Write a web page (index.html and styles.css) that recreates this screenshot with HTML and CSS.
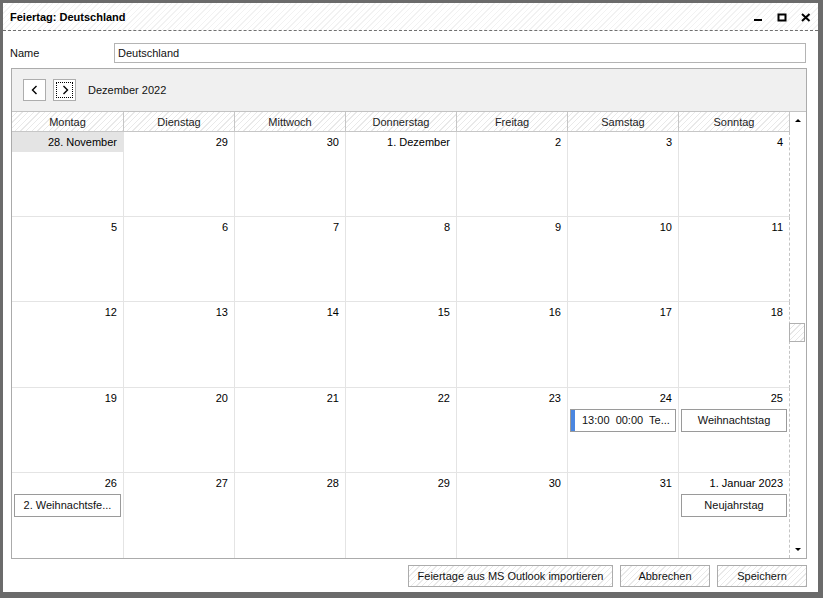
FILE: index.html
```html
<!DOCTYPE html>
<html>

<head>
    <link rel="stylesheet" href="styles.css">
</head>

<body>
    <div id="window">
        <div id="titlebar">
            <span id="title">Feiertag: Deutschland</span>
            <div id="controls">
                <svg class="ctl" width="10" height="10" viewBox="0 0 10 10"><rect x="1" y="6" width="8" height="2" fill="#000" /></svg>
                <svg class="ctl" width="10" height="10" viewBox="0 0 10 10"><rect x="1.5" y="1.5" width="7" height="6" fill="none" stroke="#000" stroke-width="2" /></svg>
                <svg class="ctl" width="10" height="10" viewBox="0 0 10 10"><path d="M1 1 L8.5 8 M8.5 1 L1 8" stroke="#000" stroke-width="2" /></svg>
            </div>
        </div>

        <div id="nameRow">
            <label for="nameInput">Name</label>
            <input type="text" id="nameInput" value="Deutschland" />
        </div>

        <div id="calendar">
            <div id="toolbar">
                <button class="nav">
                    <svg width="8" height="10" viewBox="0 0 8 10"><polyline points="5.5,1 1.5,5 5.5,9" fill="none" stroke="#000" stroke-width="1.4" /></svg>
                </button>
                <button class="nav focused">
                    <span class="focusRect">
                        <svg width="8" height="10" viewBox="0 0 8 10"><polyline points="2.5,1 6.5,5 2.5,9" fill="none" stroke="#000" stroke-width="1.4" /></svg>
                    </span>
                </button>
                <span id="month">Dezember 2022</span>
            </div>

            <div id="calBody">
                <div id="grid">
                    <div class="head">Montag</div>
                    <div class="head">Dienstag</div>
                    <div class="head">Mittwoch</div>
                    <div class="head">Donnerstag</div>
                    <div class="head">Freitag</div>
                    <div class="head">Samstag</div>
                    <div class="head">Sonntag</div>

                    <div class="day"><div class="num today">28. November</div></div>
                    <div class="day"><div class="num">29</div></div>
                    <div class="day"><div class="num">30</div></div>
                    <div class="day"><div class="num">1. Dezember</div></div>
                    <div class="day"><div class="num">2</div></div>
                    <div class="day"><div class="num">3</div></div>
                    <div class="day"><div class="num">4</div></div>

                    <div class="day"><div class="num">5</div></div>
                    <div class="day"><div class="num">6</div></div>
                    <div class="day"><div class="num">7</div></div>
                    <div class="day"><div class="num">8</div></div>
                    <div class="day"><div class="num">9</div></div>
                    <div class="day"><div class="num">10</div></div>
                    <div class="day"><div class="num">11</div></div>

                    <div class="day"><div class="num">12</div></div>
                    <div class="day"><div class="num">13</div></div>
                    <div class="day"><div class="num">14</div></div>
                    <div class="day"><div class="num">15</div></div>
                    <div class="day"><div class="num">16</div></div>
                    <div class="day"><div class="num">17</div></div>
                    <div class="day"><div class="num">18</div></div>

                    <div class="day"><div class="num">19</div></div>
                    <div class="day"><div class="num">20</div></div>
                    <div class="day"><div class="num">21</div></div>
                    <div class="day"><div class="num">22</div></div>
                    <div class="day"><div class="num">23</div></div>
                    <div class="day">
                        <div class="num">24</div>
                        <div class="event timed">13:00&nbsp; 00:00&nbsp; Te...</div>
                    </div>
                    <div class="day">
                        <div class="num">25</div>
                        <div class="event">Weihnachtstag</div>
                    </div>

                    <div class="day">
                        <div class="num">26</div>
                        <div class="event">2. Weihnachtsfe...</div>
                    </div>
                    <div class="day"><div class="num">27</div></div>
                    <div class="day"><div class="num">28</div></div>
                    <div class="day"><div class="num">29</div></div>
                    <div class="day"><div class="num">30</div></div>
                    <div class="day"><div class="num">31</div></div>
                    <div class="day">
                        <div class="num">1. Januar 2023</div>
                        <div class="event">Neujahrstag</div>
                    </div>
                </div>

                <div id="scrollbar">
                    <span class="arrow up"></span>
                    <span id="thumb"></span>
                    <span class="arrow down"></span>
                </div>
            </div>
        </div>

        <div id="buttons">
            <button class="btn wide">Feiertage aus MS Outlook importieren</button>
            <button class="btn">Abbrechen</button>
            <button class="btn">Speichern</button>
        </div>
    </div>
</body>

</html>
```

FILE: styles.css
```css
body {
    margin: 0;
    background-color: #6b6b6b;
    font-family: "Liberation Sans", Arial, sans-serif;
    font-size: 11px;
    color: #111;
}

#window {
    margin: 3px 5px 6px 3px;
    height: 589px;
    background-color: #fff;
    display: flex;
    flex-direction: column;
}

#titlebar {
    height: 27px;
    border-bottom: 1px dashed #6f6f6f;
    background: repeating-linear-gradient(135deg, #fff 0 3px, #f2f2f2 3px 4px);
    display: flex;
    align-items: center;
    justify-content: space-between;
    padding: 0 7px 0 7px;
}

#title {
    font-weight: bold;
    font-size: 11px;
    color: #000;
}

#controls {
    display: flex;
    gap: 14px;
    padding-top: 2px;
}

.ctl {
    display: block;
}

#nameRow {
    margin-top: 12px;
    height: 20px;
    display: flex;
    align-items: center;
    padding: 0 12px 0 7px;
}

#nameRow label {
    width: 104px;
}

#nameInput {
    flex: 1;
    height: 20px;
    box-sizing: border-box;
    border: 1px solid #b4b4b4;
    padding: 0 3px;
    font-family: inherit;
    font-size: 11px;
    color: #111;
    outline: none;
}

#calendar {
    margin: 5px 11px 0 8px;
    height: 491px;
    box-sizing: border-box;
    border: 1px solid #ababab;
    display: flex;
    flex-direction: column;
}

#toolbar {
    height: 42px;
    background-color: #f0f0f0;
    display: flex;
    align-items: center;
    padding-left: 11px;
    gap: 7px;
}

.nav {
    width: 23px;
    height: 22px;
    border: 1px solid #adadad;
    background-color: #fff;
    padding: 0;
    display: flex;
    align-items: center;
    justify-content: center;
}

.focusRect {
    width: 17px;
    height: 16px;
    border: 1px dotted #000;
    box-sizing: border-box;
    display: flex;
    align-items: center;
    justify-content: center;
}

#month {
    margin-left: 5px;
}

#calBody {
    flex: 1;
    display: flex;
    border-top: 1px solid #c3c3c3;
}

#grid {
    width: 778px;
    display: grid;
    grid-template-columns: 112px repeat(6, 111px);
    grid-template-rows: 20px repeat(5, 1fr);
}

.head {
    border-right: 1px solid #c6c6c6;
    border-bottom: 1px solid #c6c6c6;
    background: repeating-linear-gradient(135deg, #fff 0 3px, #e9e9e9 3px 4px);
    text-align: center;
    line-height: 20px;
    color: #222;
}

.day {
    border-right: 1px solid #e4e4e4;
    border-bottom: 1px solid #e4e4e4;
    min-width: 0;
}

.day:nth-child(7n) {
    border-right: 1px dashed #c4c4c4;
}

.day:nth-last-child(-n+7) {
    border-bottom: none;
}

.num {
    height: 20px;
    line-height: 20px;
    text-align: right;
    padding-right: 6px;
    color: #000;
}

.num.today {
    background-color: #e4e4e4;
}

.event {
    margin: 1px 2px 0 2px;
    height: 23px;
    box-sizing: border-box;
    border: 1px solid #9a9a9a;
    line-height: 21px;
    text-align: center;
    white-space: nowrap;
    overflow: hidden;
    color: #111;
}

.event.timed {
    text-align: left;
    padding-left: 11px;
    box-shadow: inset 4px 0 #4a86e0;
}

#scrollbar {
    width: 16px;
    position: relative;
}

.arrow {
    position: absolute;
    left: 5px;
    width: 0;
    height: 0;
    border-left: 3px solid transparent;
    border-right: 3px solid transparent;
}

.arrow.up {
    top: 7px;
    border-bottom: 3px solid #000;
}

.arrow.down {
    bottom: 7px;
    border-top: 3px solid #000;
}

#thumb {
    position: absolute;
    left: -1px;
    top: 211px;
    width: 16px;
    height: 19px;
    box-sizing: border-box;
    border: 1px solid #b0b0b0;
    background: repeating-linear-gradient(135deg, #fff 0 3px, #e6e6e6 3px 4px);
}

#buttons {
    margin: 6px 11px 0 0;
    height: 22px;
    display: flex;
    justify-content: flex-end;
    gap: 7px;
}

.btn {
    height: 22px;
    width: 90px;
    border: 1px solid #acacac;
    background: repeating-linear-gradient(135deg, #fff 0 3px, #e9e9e9 3px 4px);
    font-family: inherit;
    font-size: 11px;
    color: #111;
    padding: 0;
}

.btn.wide {
    width: 205px;
}
```
